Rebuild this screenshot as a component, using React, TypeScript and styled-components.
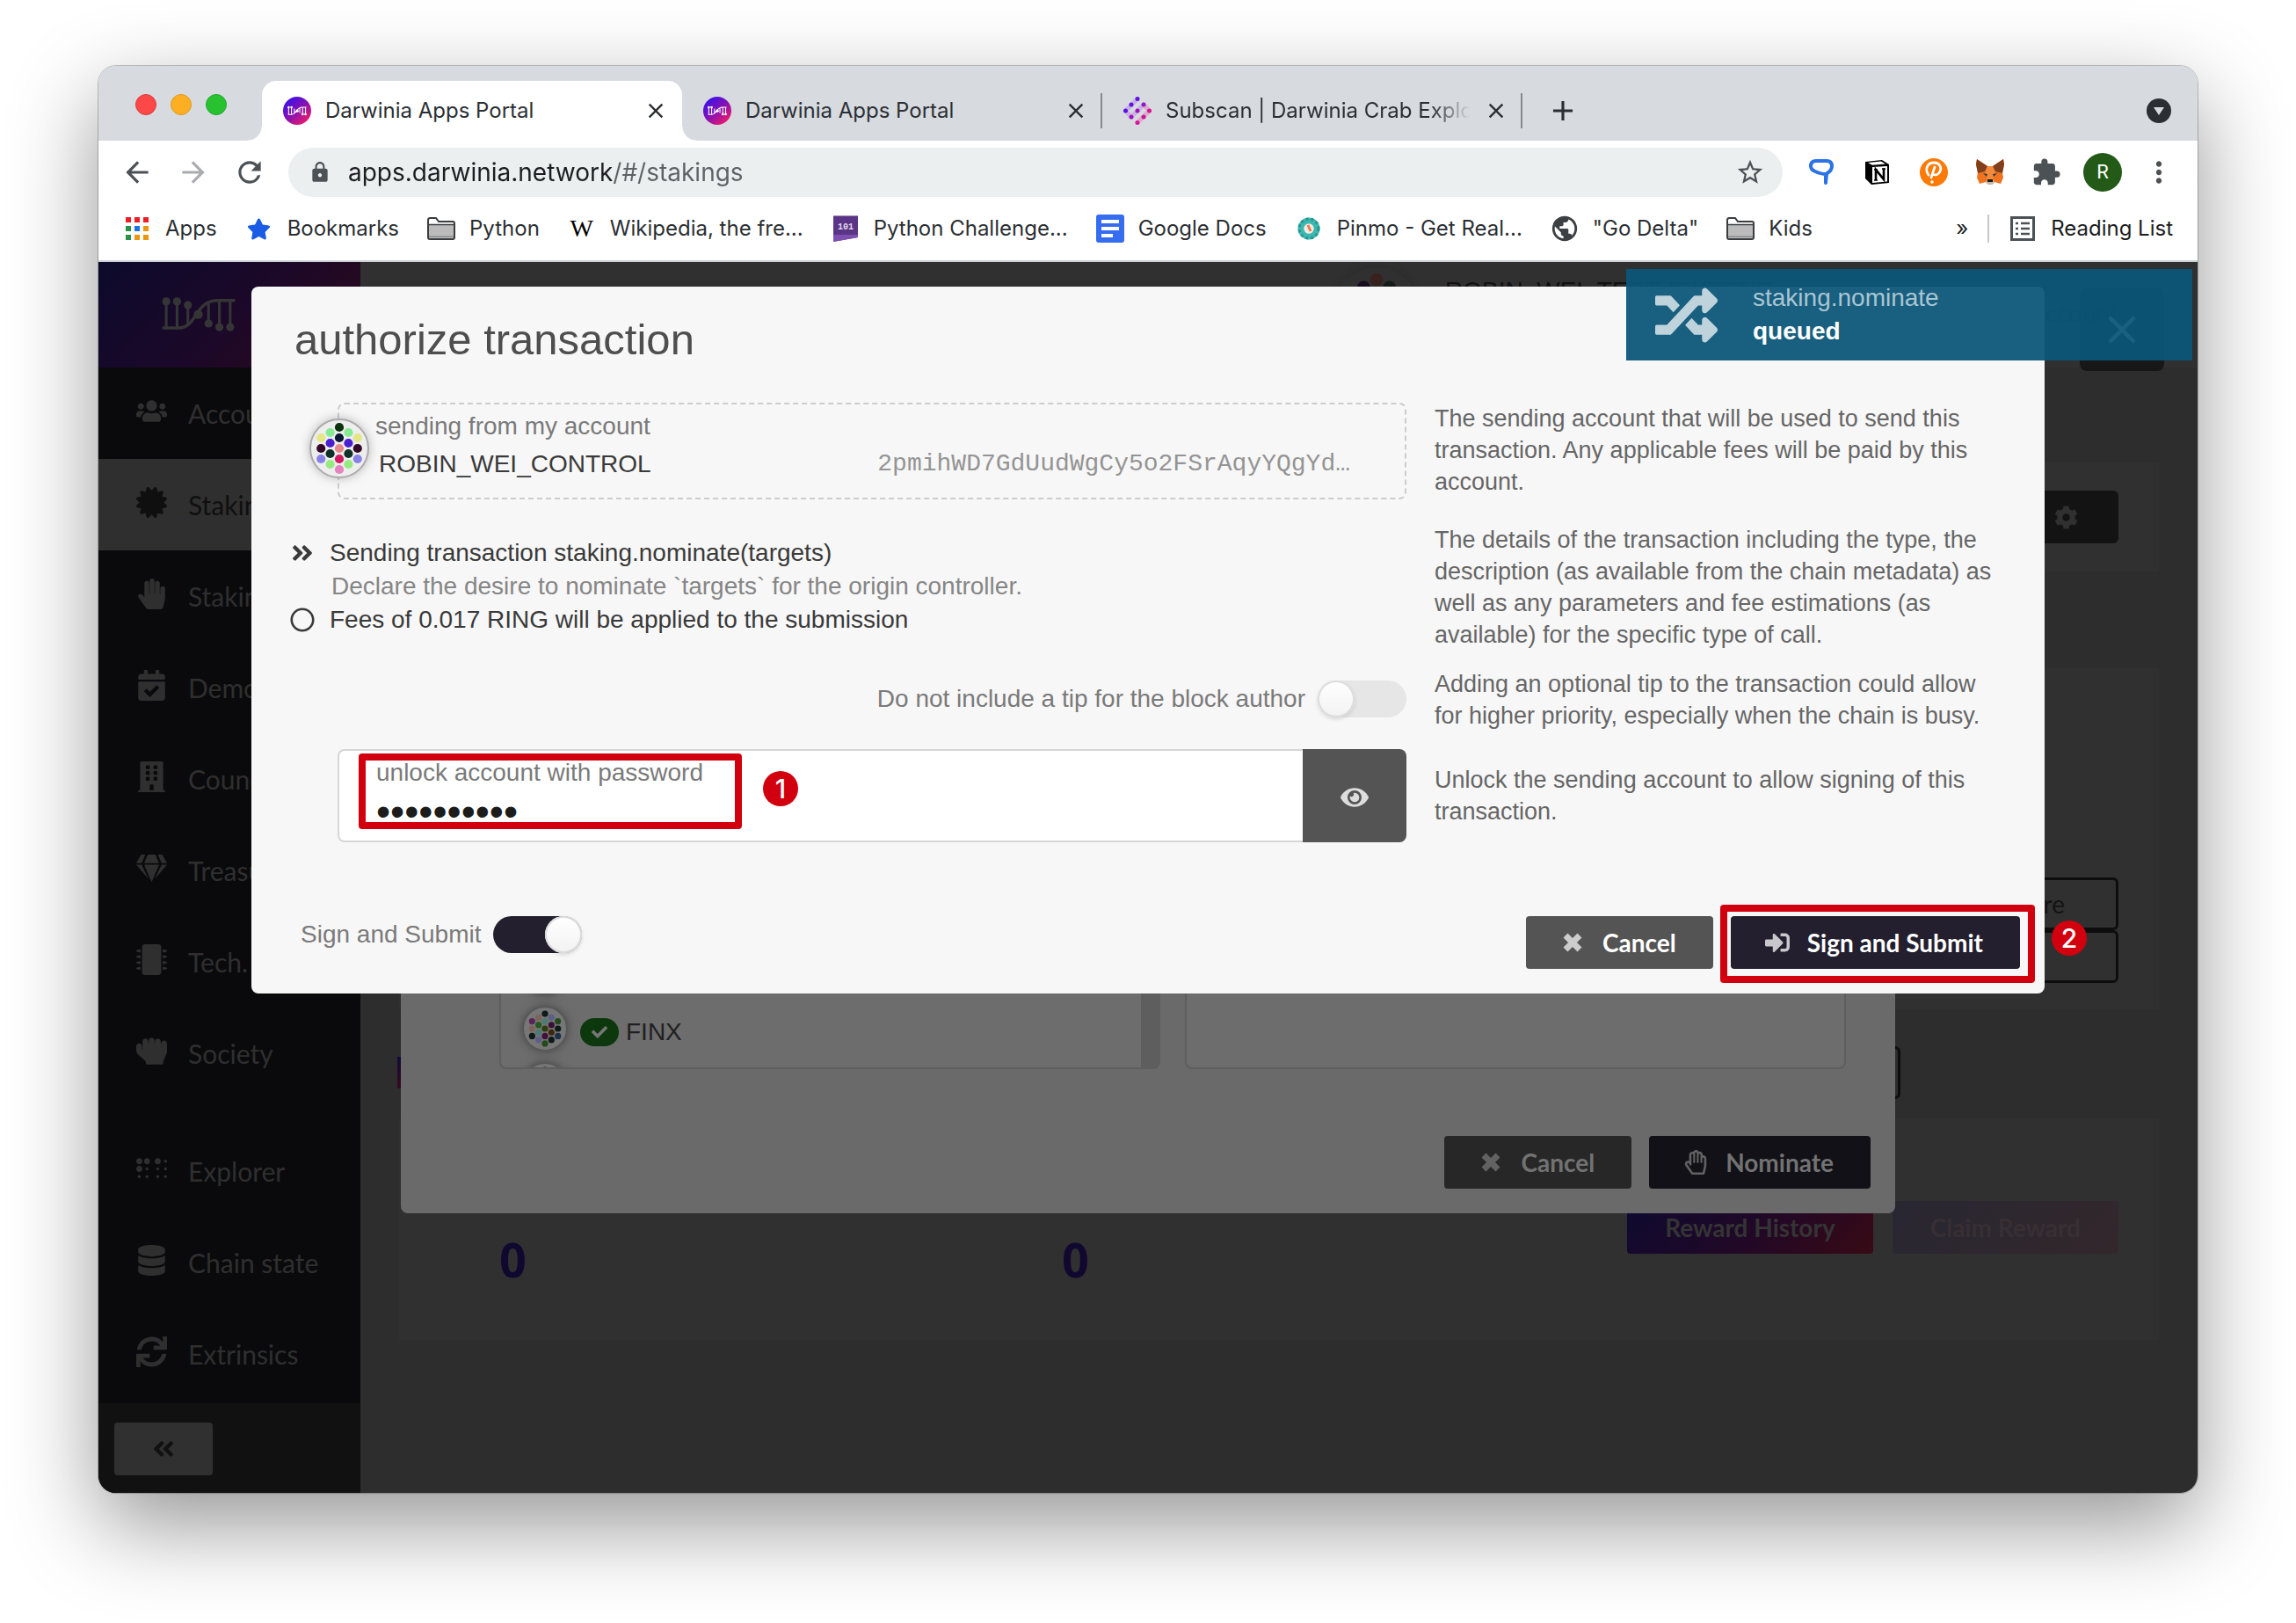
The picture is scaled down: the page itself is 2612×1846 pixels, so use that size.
import React from 'react';
import styled, { createGlobalStyle, css } from 'styled-components';
import {
  FaUsers, FaCertificate, FaHandPaper, FaRegHandPaper, FaCalendarCheck, FaBuilding, FaGem, FaMicrochip,
  FaHandRock, FaBraille, FaDatabase, FaSync, FaAngleDoubleLeft, FaAngleDoubleRight, FaRegCircle, FaEye,
  FaSignInAlt, FaRandom, FaCog, FaCheck, FaStar,
} from 'react-icons/fa';
import {
  MdArrowBack, MdArrowForward, MdRefresh, MdLock, MdStarBorder, MdExtension, MdMoreVert, MdClose, MdAdd, MdPublic,
} from 'react-icons/md';

const sans = `"Liberation Sans", Arial, sans-serif`;
const lato = `Lato, sans-serif`;
const system = `Inter, sans-serif`;
const mono = `"Liberation Mono", monospace`;

const ink = '#231f2e';
const red = '#d2000f';

const GlobalStyle = createGlobalStyle`
  *, *::before, *::after { box-sizing: border-box; }
  body { margin: 0; background: #fff; font-family: ${sans}; }
  button, input { font: inherit; border: 0; margin: 0; padding: 0; background: none; color: inherit; }
  button { cursor: pointer; }
  a { color: inherit; text-decoration: none; }
  h1, p, ul { margin: 0; padding: 0; font-weight: 400; list-style: none; }
  svg { display: block; flex: none; }
`;

/* ---------- window frame ---------- */

const Desktop = styled.div`
  display: flex;
  min-height: 100vh;
  padding: 75px 112px 148px;
`;

const Window = styled.div`
  flex: 1;
  min-width: 0;
  display: flex;
  flex-direction: column;
  border-radius: 20px;
  overflow: hidden;
  background: #fff;
  box-shadow: 0 0 0 1px rgba(0, 0, 0, 0.22), 0 36px 100px rgba(0, 0, 0, 0.42);
`;

const TabStrip = styled.div`
  display: flex;
  align-items: flex-end;
  height: 85px;
  padding: 0 30px 0 42px;
  background: #d7dadf;
`;

const Lights = styled.div`
  display: flex;
  align-items: center;
  gap: 16px;
  height: 82px;
  margin-right: 40px;
`;

const Light = styled.span<{ $fill: string; $edge: string }>`
  width: 24px;
  height: 24px;
  border-radius: 50%;
  background: ${p => p.$fill};
  border: 1px solid ${p => p.$edge};
`;

const Tab = styled.div<{ $active?: boolean; $divided?: boolean }>`
  position: relative;
  flex: 0 1 478px;
  min-width: 0;
  display: flex;
  align-items: center;
  gap: 16px;
  height: 68px;
  padding: 0 16px 0 24px;
  font: 24px/32px ${system};
  color: #2b2f33;
  ${p => p.$active && css`
    background: #fff;
    border-radius: 16px 16px 0 0;
    &::before, &::after {
      content: '';
      position: absolute;
      bottom: 0;
      width: 16px;
      height: 16px;
    }
    &::before { left: -16px; background: radial-gradient(circle at 0 0, transparent 15px, #fff 16px); }
    &::after { right: -16px; background: radial-gradient(circle at 100% 0, transparent 15px, #fff 16px); }
  `}
  ${p => p.$divided && css`
    &::after {
      content: '';
      position: absolute;
      right: 0;
      top: 14px;
      width: 2px;
      height: 40px;
      background: #85898e;
    }
  `}
`;

const TabTitle = styled.span<{ $fade?: boolean }>`
  flex: 1;
  min-width: 0;
  overflow: hidden;
  white-space: nowrap;
  ${p => p.$fade && css`mask-image: linear-gradient(90deg, #000 calc(100% - 44px), transparent);`}
`;

const PlainButton = styled.button`
  display: flex;
  align-items: center;
  justify-content: center;
`;

const NewTab = styled(PlainButton)`
  width: 40px;
  height: 68px;
  margin-left: 26px;
  color: #2b2f33;
`;

const TabSearch = styled(PlainButton)`
  height: 68px;
  margin-left: auto;
`;

const Toolbar = styled.div`
  display: flex;
  align-items: center;
  height: 72px;
  padding: 0 12px;
`;

const ToolButton = styled(PlainButton)<{ $color?: string }>`
  flex: none;
  width: 64px;
  height: 56px;
  color: ${p => p.$color || '#4c5156'};
`;

const Omnibox = styled.div`
  flex: 1;
  min-width: 0;
  display: flex;
  align-items: center;
  gap: 16px;
  height: 56px;
  margin: 0 12px;
  padding: 0 20px;
  border-radius: 28px;
  background: #ebeff0;
  color: #4c5156;
`;

const UrlInput = styled.input`
  flex: 1;
  min-width: 0;
  font: 28px/36px ${system};
  outline: 0;
  color: transparent;
  background: linear-gradient(90deg, #1b1d20 300px, #5d6266 300px);
  background-clip: text;
`;

const Avatar = styled.span`
  width: 44px;
  height: 44px;
  border-radius: 50%;
  background: #235a17;
  color: #fff;
  font: 22px/44px Roboto, sans-serif;
`;

const BookmarkBar = styled.nav`
  display: flex;
  align-items: center;
  gap: 32px;
  padding: 0 28px 8px;
  height: 66px;
  border-bottom: 2px solid #cdd2d6;
  font: 24px/32px ${system};
  color: #2b2f33;
`;

const Bookmark = styled.a`
  display: flex;
  align-items: center;
  gap: 16px;
  white-space: nowrap;
`;

const IconBox = styled.span`
  display: flex;
  justify-content: center;
  width: 32px;
`;

const Wiki = styled.span`
  font: 28px/32px "Liberation Serif", serif;
  color: #000;
`;

const BookmarkEnd = styled.div`
  display: flex;
  align-items: center;
  gap: 22px;
  margin-left: auto;
  color: #1b1d20;
`;

const BarDivider = styled.span`
  width: 2px;
  height: 32px;
  background: #c4c8cc;
`;

/* ---------- dimmed application ---------- */

const Viewport = styled.div`
  position: relative;
  flex: 1;
  display: flex;
  background: #2d2d2d;
`;

const Sidebar = styled.aside`
  flex: 0 0 298px;
  min-width: 0;
  display: flex;
  flex-direction: column;
  background: #0a0a0c;
  color: #2f2f2f;
  font: 30px/36px ${lato};
`;

const Brand = styled.div`
  height: 120px;
  padding: 40px 0 0 72px;
  background: linear-gradient(135deg, #0c0a2c, #1d0828 55%, #2d0a18);
  color: #353535;
`;

const NavList = styled.ul`
  & + & { margin-top: 30px; }
`;

const NavLink = styled.a<{ $active?: boolean }>`
  display: flex;
  align-items: center;
  gap: 20px;
  height: 104px;
  padding-left: 38px;
  white-space: nowrap;
  background: ${p => (p.$active ? '#2f2f2f' : 'transparent')};
  color: ${p => (p.$active ? '#0f0f0f' : 'inherit')};
`;

const NavIcon = styled.span`
  flex: none;
  display: flex;
  justify-content: center;
  width: 44px;
  padding-bottom: 6px;
  svg { width: auto; height: 35px; }
`;

const SidebarFoot = styled.div`
  height: 102px;
  margin-top: auto;
  padding: 22px 18px;
  background: #111;
`;

const Collapse = styled(PlainButton)`
  width: 112px;
  height: 60px;
  border-radius: 4px;
  background: #303030;
  color: #111;
`;

const Main = styled.main`
  flex: 1;
  min-width: 0;
  display: flex;
  flex-direction: column;
  font-family: ${lato};
`;

const Header = styled.header`
  display: flex;
  align-items: flex-start;
  gap: 30px;
  height: 120px;
  padding: 6px 48px 0 1108px;
  background: #303030;
  color: #111;
  font: 28px/42px ${sans};
`;

const HeaderName = styled.span`
  padding-top: 6px;
  white-space: nowrap;
`;

const HeaderAction = styled(PlainButton)`
  height: 60px;
  margin: 22px 0 0 auto;
  padding: 0 40px;
  border: 2px solid #262626;
  font: 28px/36px ${lato};
`;

const Content = styled.div`
  display: flex;
  flex-direction: column;
  padding: 108px 44px 0;
`;

const Card = styled.section<{ $h: number }>`
  min-height: ${p => p.$h}px;
  padding: 32px 46px 0;
  background: #303030;
`;

const CardEnd = styled.div<{ $top?: number }>`
  display: flex;
  flex-direction: column;
  align-items: flex-end;
  padding-top: ${p => p.$top || 0}px;
`;

const SettingsButton = styled(PlainButton)`
  width: 120px;
  height: 60px;
  border-radius: 6px;
  background: #131313;
  color: #303030;
`;

const OutlineButton = styled(PlainButton)`
  width: 240px;
  height: 60px;
  padding-right: 58px;
  justify-content: flex-end;
  border: 3px solid #0d0d0d;
  border-radius: 6px;
  color: #131313;
  font: 28px/36px ${lato};
`;

const StripRow = styled.div`
  display: flex;
  align-items: center;
  height: 124px;
  padding-top: 20px;
  margin-left: -2px;
`;

const Marker = styled.span`
  width: 8px;
  height: 36px;
  margin-right: 1462px;
  background: linear-gradient(#120c36, #350b20);
`;

const Spacer = styled.div`
  height: 110px;
`;

const RewardGrid = styled.div`
  display: grid;
  grid-template-columns: 640px 640px 1fr;
  align-items: start;
  padding: 62px 0 0 68px;
`;

const Figure = styled.span`
  padding-top: 34px;
  font: 700 54px/64px "Open Sans", sans-serif;
  color: #110830;
`;

const RewardButtons = styled.div`
  display: flex;
  justify-content: flex-end;
  gap: 22px;
`;

const GradientButton = styled.button<{ $faint?: boolean }>`
  height: 60px;
  padding: 0 43px;
  border-radius: 4px;
  white-space: nowrap;
  font: 700 28px/36px ${lato};
  color: #343434;
  background: linear-gradient(135deg, #0e0a30, #220826 55%, #380a14);
  ${p => p.$faint && css`
    background: linear-gradient(135deg, #282732, #33272b);
    color: #372f34;
  `}
`;

/* ---------- dialogs ---------- */

const Layer = styled.div`
  position: absolute;
  inset: 28px 0 auto;
  display: flex;
  justify-content: center;
`;

const NominateDialog = styled.section`
  width: 72%;
  max-width: 1700px;
  height: 1054px;
  display: flex;
  flex-direction: column;
  justify-content: flex-end;
  padding: 28px;
  border-radius: 8px;
  background: #6a6a6a;
`;

const Lists = styled.div`
  display: grid;
  grid-template-columns: 1fr 1fr;
  gap: 28px;
  padding: 0 28px 76px 84px;
`;

const ListBox = styled.ul<{ $scroll?: boolean }>`
  height: 146px;
  overflow: hidden;
  padding: 2px 26px;
  border: 2px solid #5e5e5e;
  border-radius: 8px;
  background: #6d6d6d;
  ${p => p.$scroll && css`background: linear-gradient(270deg, #5e5e5e 20px, #6d6d6d 20px);`}
`;

const ListItem = styled.li`
  display: flex;
  align-items: center;
  height: 64px;
  font: 28px/36px ${sans};
  color: #202020;
`;

const CheckBadge = styled.span`
  display: flex;
  align-items: center;
  justify-content: center;
  width: 44px;
  height: 32px;
  margin: 8px 8px 0 16px;
  border-radius: 16px;
  background: #0d380d;
  color: #777;
`;

const ItemName = styled.span`
  padding-top: 8px;
`;

const AuthDialog = styled.section`
  width: 86%;
  max-width: 2040px;
  padding: 30px 0 28px;
  border-radius: 8px;
  background: #f7f7f7;
  color: #4e4e4e;
  font: 28px/38px ${sans};
`;

const Title = styled.h1`
  padding: 0 49px 42px;
  font-size: 49px;
  line-height: 60px;
`;

const Row = styled.div<{ $gap?: number }>`
  display: grid;
  grid-template-columns: minmax(0, 1fr) 642px;
  gap: 32px;
  padding: 0 52px ${p => p.$gap || 0}px 48px;
`;

const Help = styled.p<{ $top?: number }>`
  padding-top: ${p => p.$top || 0}px;
  font-size: 27px;
  line-height: 36px;
  color: #666;
`;

const AccountBox = styled.div`
  position: relative;
  height: 110px;
  margin-left: 50px;
  padding: 4px 62px 0 41px;
  border: 2px dashed #ccc;
  border-radius: 8px;
  line-height: 42px;
`;

const AccountIcon = styled.span`
  position: absolute;
  left: -34px;
  top: 16px;
`;

const FieldLabel = styled.label`
  display: block;
  line-height: 42px;
  color: #7a7a7a;
`;

const AccountLine = styled.div`
  display: flex;
  justify-content: space-between;
  padding-left: 4px;
  line-height: 44px;
  color: #3a3a3a;
`;

const Address = styled.span`
  font-family: ${mono};
  color: #949494;
`;

const Details = styled.ul`
  padding-top: 14px;
  color: #3a3a3a;
`;

const Detail = styled.li`
  display: grid;
  grid-template-columns: 20px 1fr;
  column-gap: 21px;
  align-items: center;
`;

const DetailIcon = styled.span`
  display: flex;
  justify-content: center;
`;

const Note = styled.span`
  grid-column: 2;
  padding-left: 2px;
  color: #868686;
`;

const SwitchRow = styled.label<{ $end?: boolean }>`
  display: flex;
  align-items: center;
  justify-content: ${p => (p.$end ? 'flex-end' : 'flex-start')};
  gap: 14px;
  height: 42px;
  color: #7a7a7a;
`;

const TipCell = styled.div`
  padding-top: 14px;
`;

const Switch = styled.input`
  appearance: none;
  flex: none;
  width: 101px;
  height: 42px;
  border-radius: 21px;
  background: #e6e6e6;
  &::before {
    content: '';
    display: block;
    width: 42px;
    height: 42px;
    border-radius: 50%;
    background: linear-gradient(#fff, #f2f2f2);
    box-shadow: 0 2px 4px rgba(34, 36, 38, 0.15), inset 0 0 0 2px #dcdcdd;
  }
  &:checked { background: ${ink}; }
  &:checked::before { margin-left: auto; }
`;

const PasswordBox = styled.div`
  position: relative;
  display: flex;
  height: 106px;
  margin-left: 50px;
`;

const PasswordField = styled.div`
  flex: 1;
  padding: 4px 0 0 42px;
  border: 2px solid #d6d6d6;
  border-right: 0;
  border-radius: 8px 0 0 8px;
  background: #fff;
`;

const PasswordInput = styled.input`
  display: block;
  width: 100%;
  height: 46px;
  outline: 0;
  color: #1c1c1c;
  font: 46px/46px ${sans};
`;

const RevealButton = styled(PlainButton)`
  width: 118px;
  padding-top: 4px;
  border-radius: 0 8px 8px 0;
  background: #545454;
  color: #ddd;
`;

const Actions = styled.div`
  display: flex;
  align-items: flex-start;
  justify-content: space-between;
  padding: 84px 28px 0 56px;
`;

const ButtonRow = styled.div`
  display: flex;
  justify-content: flex-end;
  gap: 20px;
`;

const ActionButton = styled.button<{ $bg: string; $fg: string; $icon: string }>`
  position: relative;
  display: flex;
  align-items: center;
  height: 60px;
  padding: 0 42px 0 36px;
  border-radius: 4px;
  background: ${p => p.$bg};
  color: ${p => p.$fg};
  white-space: nowrap;
  font: 700 28px/36px ${lato};
  svg { width: 34px; margin-right: 17px; color: ${p => p.$icon}; }
`;

/* ---------- overlays ---------- */

const Highlight = styled.span<{ $inset: string }>`
  position: absolute;
  inset: ${p => p.$inset};
  border: 8px solid ${red};
  border-radius: 4px;
  pointer-events: none;
`;

const FieldHighlight = styled(Highlight)`
  width: 436px;
`;

const StepBadge = styled.span<{ $left: string; $top: number }>`
  position: absolute;
  left: ${p => p.$left};
  top: ${p => p.$top}px;
  width: 40px;
  height: 40px;
  border-radius: 50%;
  background: ${red};
  color: #fff;
  text-align: center;
  font: 500 30px/40px ${system};
`;

const CloseOverlay = styled(PlainButton)`
  position: absolute;
  right: 38px;
  top: 30px;
  width: 96px;
  height: 94px;
  border-radius: 8px;
  background: rgba(0, 0, 0, 0.5);
  color: #fff;
`;

const Toast = styled.div`
  position: absolute;
  right: 6px;
  top: 8px;
  width: 644px;
  height: 104px;
  display: flex;
  align-items: center;
  gap: 40px;
  padding: 0 33px;
  background: rgba(11, 85, 119, 0.94);
  color: #fff;
  font: 28px/38px ${sans};
`;

const ToastTitle = styled.div`
  color: #a9c6d4;
`;

const ToastBody = styled.div``;

/* ---------- drawings ---------- */

const Dna = ({ size }: { size: number }) => (
  <svg width={size} height={size * 0.47} viewBox="0 0 82 38" fill="none" stroke="currentColor" strokeWidth="3.4" strokeLinecap="round">
    <path d="M2 34H18C40 34 36 3.500 62 3.500H80" />
    <path d="M5 5v29M17 5v29M29 9v22M52 8v20M64 4v29M76 4v29" strokeWidth="3" />
    <g fill="currentColor" stroke="none">
      <circle cx="5" cy="4.500" r="4.500" /><circle cx="17" cy="4.500" r="4.500" /><circle cx="29" cy="8.500" r="4.500" />
      <circle cx="40.500" cy="19" r="5" /><circle cx="52" cy="29" r="4.500" /><circle cx="64" cy="33" r="4.500" /><circle cx="76" cy="33" r="4.500" />
    </g>
  </svg>
);

const DarwiniaIcon = ({ id }: { id: string }) => (
  <svg width="32" height="32" viewBox="0 0 32 32">
    <defs>
      <linearGradient id={id} x1="0.15" y1="0.1" x2="0.85" y2="0.95">
        <stop offset="0" stopColor="#3c10e8" /><stop offset="0.5" stopColor="#8a12b0" /><stop offset="1" stopColor="#f51c66" />
      </linearGradient>
    </defs>
    <circle cx="16" cy="16" r="16" fill={`url(#${id})`} />
    <g transform="translate(5 11) scale(0.270)" fill="none" stroke="#fff" strokeWidth="4">
      <path d="M2 34H18C40 34 36 3.500 62 3.500H80M5 5v29M17 5v29M29 9v22M52 8v20M64 4v29M76 4v29" />
      <g fill="#fff" stroke="none"><circle cx="5" cy="4" r="5" /><circle cx="17" cy="4" r="5" /><circle cx="41" cy="19" r="6" /><circle cx="64" cy="33" r="5" /><circle cx="76" cy="33" r="5" /></g>
    </g>
  </svg>
);

const subscanDots: [number, number, string][] = [
  [16, 2.5, '#6412e0'], [9, 9, '#6412e0'], [23, 9, '#8f18c8'], [2.5, 16, '#5a0ee6'], [16, 16, '#9a14c0'],
  [29.5, 16, '#d01888'], [9, 23, '#9a14c0'], [23, 23, '#c81890'], [16, 29.5, '#d8189c'],
];
const SubscanIcon = () => (
  <svg width="32" height="32" viewBox="0 0 32 32">
    <g strokeWidth="5" strokeLinecap="round" fill="none">
      <path d="M16 2.500 2.500 16" stroke="#c3b0ea" /><path d="M23 9 9 23M2.500 16l6.500 7" stroke="#ccb2e2" /><path d="M29.500 16 16 29.500M23 9l6.500 7" stroke="#dfa8cf" />
    </g>
    {subscanDots.map(([x, y, c]) => <circle key={`${x}-${y}`} cx={x} cy={y} r="2.500" fill={c} />)}
  </svg>
);

const dotPlaces: [number, number][] = [
  [0, -24], [0, -12], [0, 0], [0, 12], [0, 24],
  [-10.4, -18], [-10.4, -6], [-10.4, 6], [-10.4, 18],
  [10.4, -18], [10.4, -6], [10.4, 6], [10.4, 18],
  [-20.8, -12], [-20.8, 0], [-20.8, 12],
  [20.8, -12], [20.8, 0], [20.8, 12],
];

const IdenticonSvg = styled.svg<{ $shade: number }>`
  overflow: visible;
  filter: drop-shadow(0 0 6px rgba(0, 0, 0, ${p => p.$shade}));
`;

const Identicon = ({ size, fill, edge, colors, shade = 0.25 }: { size: number; fill: string; edge: string; colors: string[]; shade?: number }) => (
  <IdenticonSvg width={size} height={size} viewBox="-34 -34 68 68" $shade={shade}>
    <circle r="33" fill={fill} stroke={edge} strokeWidth="2" />
    {dotPlaces.map(([x, y], i) => <circle key={i} cx={x} cy={y} r="5.100" fill={colors[i]} />)}
  </IdenticonSvg>
);

const controlColors = [
  '#0d330d', '#0a1832', '#e5898a', '#d01a60', '#e583bf',
  '#86eb92', '#4a1fd0', '#0d3028', '#96ea80', '#86eb92', '#4a1fd0', '#0d3028', '#96ea80',
  '#e3e787', '#330828', '#8781e6', '#e3e787', '#330828', '#8781e6',
];
const finxColors = [
  '#0d1a18', '#4f7a70', '#2c3f0c', '#451040', '#234a1c',
  '#7d6459', '#23591f', '#4c7a74', '#5e5f86', '#5c5f84', '#3a1038', '#40280f', '#0d1a18',
  '#5a2356', '#7d6459', '#0d1a18', '#234a1c', '#0d1a18', '#1c3048',
];
const headerColors = [
  '#3a221c', '#303030', '#303030', '#303030', '#303030',
  '#1a0c20', '#303030', '#303030', '#303030', '#141c18', '#303030', '#303030', '#303030',
  '#303030', '#303030', '#303030', '#303030', '#303030', '#303030',
];

const CrossIcon = () => (
  <svg width="34" height="28" viewBox="0 0 34 28" fill="none" stroke="currentColor" strokeWidth="7" strokeLinejoin="round">
    <path d="M9 6l16 16M25 6L9 22" />
  </svg>
);

const AppsGrid = () => (
  <svg width="26" height="26" viewBox="0 0 26 26">
    {['#ee1d25', '#ee1d25', '#ee1d25', '#2a9248', '#1a73e8', '#eb9610', '#2a9248', '#eb9610', '#eb9610'].map((c, i) => (
      <rect key={i} x={(i % 3) * 10} y={Math.floor(i / 3) * 10} width="6" height="6" fill={c} />
    ))}
  </svg>
);

const Folder = () => (
  <svg width="32" height="26" viewBox="0 0 32 26">
    <path d="M1 3.500Q1 1 3 1h7l3 4h16q2 0 2 2v16q0 2-2 2H3q-2 0-2-2z" fill="#fff" stroke="#3a3d40" strokeWidth="2" />
    <path d="M2 9h28v14H2z" fill="#bbb" /><path d="M1 8.500h30" stroke="#3a3d40" strokeWidth="1.500" />
    <path d="M2 22.500h28" stroke="#888" strokeWidth="2" />
  </svg>
);

const Challenge = () => (
  <svg width="28" height="30" viewBox="0 0 28 30">
    <path d="M0 0h28v25L0 30z" fill="#5b3585" /><path d="M0 22h28v3L0 30z" fill="#7d4fb0" />
    <path d="M0 .5h28" stroke="#a48cba" />
    <text x="14" y="16" fill="#e4dcee" fontSize="10" fontFamily="Liberation Mono, monospace" fontWeight="700" textAnchor="middle">101</text>
  </svg>
);

const Docs = () => (
  <svg width="32" height="32" viewBox="0 0 32 32">
    <rect width="32" height="32" rx="3" fill="#356cf0" />
    <path d="M6 8h20M6 16h20M6 24h13" stroke="#fff" strokeWidth="4" />
  </svg>
);

const Pinmo = () => (
  <svg width="28" height="28" viewBox="0 0 28 28">
    <circle cx="14" cy="14" r="9" fill="none" stroke="#3cb8b0" strokeWidth="7" />
    <circle cx="14" cy="14" r="11" fill="none" stroke="#2a938f" strokeWidth="3" strokeDasharray="3 3" />
    <circle cx="14" cy="14" r="5.500" fill="#f6ece4" /><path d="M13 10l3 7" stroke="#ee7a50" strokeWidth="3" />
  </svg>
);

const ReadingList = () => (
  <svg width="28" height="28" viewBox="0 0 28 28" fill="none" stroke="#4c5156">
    <rect x="1.500" y="1.500" width="25" height="25" strokeWidth="3" />
    <path d="M6 8h3M12 8h10M6 14h3M12 14h10M6 20h3M12 20h10" strokeWidth="2.600" />
  </svg>
);

const TabSearchIcon = () => (
  <svg width="28" height="28" viewBox="0 0 28 28">
    <circle cx="14" cy="14" r="14" fill="#2b2f33" /><path d="M8 10h12l-6 9z" fill="#d7dadf" />
  </svg>
);

const PinIcon = () => (
  <svg width="28" height="30" viewBox="0 0 28 30" fill="none" stroke="#2a72e5" strokeWidth="4" strokeLinejoin="round">
    <path d="M8 2h12q6 0 6 6 0 5-6 8.500L19 27V17Q14 17 7 14 2 12 2 8q0-6 6-6z" />
  </svg>
);

const NotionIcon = () => (
  <svg width="30" height="30" viewBox="0 0 30 30">
    <path d="M1 3 20 1l8 5v21L8 29l-7-7z" fill="#000" />
    <path d="M4 4 19 2.500l5 3L9 6.700z" fill="#fff" /><path d="M9 9l17-1v17.500L9 27z" fill="#fff" />
    <path d="M13 24V12l9 11V10.500" fill="none" stroke="#000" strokeWidth="2.600" />
    <path d="M11 12h4M20 11h4M11 24h4" stroke="#000" strokeWidth="1.500" />
  </svg>
);

const OrangeP = () => (
  <svg width="32" height="32" viewBox="0 0 32 32">
    <circle cx="16" cy="16" r="16" fill="#fb7a08" />
    <path d="M10 19C5 12 9 5 16 5c7 0 9 6 7 10-1.500 3.500-5 4.500-8 3.500M17 10l-4 12" fill="none" stroke="#fff" strokeWidth="2.800" strokeLinecap="round" />
    <circle cx="14" cy="27" r="1.800" fill="#fff" />
  </svg>
);

const Fox = () => (
  <svg width="32" height="30" viewBox="0 0 32 30">
    <path d="M1 0l12 8h6L31 0l1 6-2 9 1 6-3 7-7-2-3 3h-4l-3-3-7 2-3-7 1-6-2-9z" fill="#ee7420" />
    <path d="M1 0l12 8-3 6-8 2L0 6zM31 0 19 8l3 6 8 2 2-10z" fill="#80401c" />
    <path d="M13 8h6l3 8-3 7h-6l-3-7z" fill="#f58a3a" /><path d="M8 16l5 1-1 3zM24 16l-5 1 1 3z" fill="#343a44" />
    <path d="M11 26l2-3h6l2 3-3 3h-4z" fill="#c8b8a8" /><path d="M13 23h6v3h-6z" fill="#1a1a1c" />
  </svg>
);

/* ---------- page ---------- */

const primaryNav = [
  { label: 'Accounts', icon: FaUsers }, { label: 'Staking', icon: FaCertificate, active: true },
  { label: 'Staking', icon: FaHandPaper }, { label: 'Democracy', icon: FaCalendarCheck },
  { label: 'Council', icon: FaBuilding }, { label: 'Treasury', icon: FaGem },
  { label: 'Tech. committee', icon: FaMicrochip }, { label: 'Society', icon: FaHandRock },
];
const secondaryNav = [
  { label: 'Explorer', icon: FaBraille }, { label: 'Chain state', icon: FaDatabase }, { label: 'Extrinsics', icon: FaSync },
];

type NavEntry = { label: string; icon: React.ComponentType<any>; active?: boolean };

const NavGroup = ({ items }: { items: NavEntry[] }) => (
  <>
    {items.map(({ label, icon: Icon, active }, i) => (
      <li key={i}>
        <NavLink href="#" $active={active}>
          <NavIcon><Icon /></NavIcon>
          {label}
        </NavLink>
      </li>
    ))}
  </>
);

const bookmarks = [
  { label: 'Apps', icon: <AppsGrid /> },
  { label: 'Bookmarks', icon: <FaStar size={27} color="#1a5ce6" /> },
  { label: 'Python', icon: <Folder /> },
  { label: 'Wikipedia, the fre...', icon: <Wiki>W</Wiki> },
  { label: 'Python Challenge...', icon: <Challenge /> },
  { label: 'Google Docs', icon: <Docs /> },
  { label: 'Pinmo - Get Real...', icon: <Pinmo /> },
  { label: '"Go Delta"', icon: <MdPublic size={34} color="#3c4043" /> },
  { label: 'Kids', icon: <Folder /> },
];

const Chrome = () => (
  <>
    <TabStrip>
      <Lights>
        <Light $fill="#fc4846" $edge="#e0383a" />
        <Light $fill="#fdaf24" $edge="#df9a20" />
        <Light $fill="#28c231" $edge="#1fa82a" />
      </Lights>
      <Tab $active>
        <DarwiniaIcon id="fav-a" />
        <TabTitle>Darwinia Apps Portal</TabTitle>
        <PlainButton aria-label="Close tab"><MdClose size={28} /></PlainButton>
      </Tab>
      <Tab $divided>
        <DarwiniaIcon id="fav-b" />
        <TabTitle>Darwinia Apps Portal</TabTitle>
        <PlainButton aria-label="Close tab"><MdClose size={28} /></PlainButton>
      </Tab>
      <Tab $divided>
        <SubscanIcon />
        <TabTitle $fade>Subscan | Darwinia Crab Explorer</TabTitle>
        <PlainButton aria-label="Close tab"><MdClose size={28} /></PlainButton>
      </Tab>
      <NewTab aria-label="New tab"><MdAdd size={38} /></NewTab>
      <TabSearch aria-label="Search tabs"><TabSearchIcon /></TabSearch>
    </TabStrip>
    <Toolbar>
      <ToolButton aria-label="Back"><MdArrowBack size={38} /></ToolButton>
      <ToolButton aria-label="Forward" $color="#a9acb0"><MdArrowForward size={38} /></ToolButton>
      <ToolButton aria-label="Reload"><MdRefresh size={38} /></ToolButton>
      <Omnibox>
        <IconBox><MdLock size={26} /></IconBox>
        <UrlInput aria-label="Address" defaultValue="apps.darwinia.network/#/stakings" />
        <PlainButton aria-label="Bookmark this page"><MdStarBorder size={34} /></PlainButton>
      </Omnibox>
      <ToolButton aria-label="Pin"><PinIcon /></ToolButton>
      <ToolButton aria-label="Notion"><NotionIcon /></ToolButton>
      <ToolButton aria-label="Collect"><OrangeP /></ToolButton>
      <ToolButton aria-label="Wallet"><Fox /></ToolButton>
      <ToolButton aria-label="Extensions"><MdExtension size={34} /></ToolButton>
      <ToolButton aria-label="Profile"><Avatar>R</Avatar></ToolButton>
      <ToolButton aria-label="Menu"><MdMoreVert size={38} /></ToolButton>
    </Toolbar>
    <BookmarkBar>
      {bookmarks.map(b => (
        <Bookmark key={b.label} href="#"><IconBox>{b.icon}</IconBox>{b.label}</Bookmark>
      ))}
      <BookmarkEnd>
        <span>»</span>
        <BarDivider />
        <Bookmark href="#"><IconBox><ReadingList /></IconBox>Reading List</Bookmark>
      </BookmarkEnd>
    </BookmarkBar>
  </>
);

const Background = () => (
  <>
    <Sidebar>
      <Brand><Dna size={84} /></Brand>
      <NavList><NavGroup items={primaryNav} /></NavList>
      <NavList><NavGroup items={secondaryNav} /></NavList>
      <SidebarFoot>
        <Collapse aria-label="Collapse sidebar"><FaAngleDoubleLeft size={28} /></Collapse>
      </SidebarFoot>
    </Sidebar>
    <Main>
      <Header>
        <Identicon size={96} fill="#303030" edge="#303030" shade={0.12} colors={headerColors} />
        <HeaderName>ROBIN_WEI_TEST (EXTENS</HeaderName>
        <HeaderAction>account</HeaderAction>
      </Header>
      <Content>
        <Card $h={124}>
          <CardEnd><SettingsButton aria-label="Settings"><FaCog size={27} /></SettingsButton></CardEnd>
        </Card>
        <Spacer />
        <Card $h={388}>
          <CardEnd $top={206}>
            <OutlineButton>Bond more</OutlineButton>
            <OutlineButton aria-label="Unbond" />
          </CardEnd>
        </Card>
        <StripRow>
          <Marker />
          <OutlineButton aria-label="Nominate" />
        </StripRow>
        <Card $h={252}>
          <RewardGrid>
            <Figure>0</Figure>
            <Figure>0</Figure>
            <RewardButtons>
              <GradientButton>Reward History</GradientButton>
              <GradientButton $faint>Claim Reward</GradientButton>
            </RewardButtons>
          </RewardGrid>
        </Card>
      </Content>
    </Main>
  </>
);

const Nominate = () => (
  <Layer>
    <NominateDialog>
      <Lists>
        <ListBox $scroll>
          <ListItem><Identicon size={48} fill="#777" edge="#777" shade={0.5} colors={finxColors} /></ListItem>
          <ListItem>
            <Identicon size={48} fill="#777" edge="#777" shade={0.5} colors={finxColors} />
            <CheckBadge><FaCheck size={18} /></CheckBadge>
            <ItemName>FINX</ItemName>
          </ListItem>
          <ListItem><Identicon size={48} fill="#777" edge="#777" shade={0.5} colors={finxColors} /></ListItem>
        </ListBox>
        <ListBox />
      </Lists>
      <ButtonRow>
        <ActionButton $bg="#272727" $fg="#727272" $icon="#626262"><CrossIcon />Cancel</ActionButton>
        <ActionButton $bg="#121117" $fg="#727272" $icon="#626262"><FaRegHandPaper size={28} />Nominate</ActionButton>
      </ButtonRow>
    </NominateDialog>
  </Layer>
);

const Authorize = () => (
  <Layer>
    <AuthDialog role="dialog" aria-labelledby="auth-title">
      <Title id="auth-title">authorize transaction</Title>
      <Row $gap={28}>
        <AccountBox>
          <AccountIcon><Identicon size={68} fill="#eee" edge="#aaa" colors={controlColors} /></AccountIcon>
          <FieldLabel as="div">sending from my account</FieldLabel>
          <AccountLine>
            <span>ROBIN_WEI_CONTROL</span>
            <Address>2pmihWD7GdUudWgCy5o2FSrAqyYQgYd…</Address>
          </AccountLine>
        </AccountBox>
        <Help>The sending account that will be used to send this transaction. Any applicable fees will be paid by this account.</Help>
      </Row>
      <Row $gap={20}>
        <Details>
          <Detail>
            <DetailIcon><FaAngleDoubleRight size={28} /></DetailIcon>
            <span>Sending transaction staking.nominate(targets)</span>
            <Note>Declare the desire to nominate `targets` for the origin controller.</Note>
          </Detail>
          <Detail>
            <DetailIcon><FaRegCircle size={28} /></DetailIcon>
            <span>Fees of 0.017 RING will be applied to the submission</span>
          </Detail>
        </Details>
        <Help>The details of the transaction including the type, the description (as available from the chain metadata) as well as any parameters and fee estimations (as available) for the specific type of call.</Help>
      </Row>
      <Row $gap={20}>
        <TipCell>
          <SwitchRow $end>
            Do not include a tip for the block author
            <Switch type="checkbox" />
          </SwitchRow>
        </TipCell>
        <Help>Adding an optional tip to the transaction could allow for higher priority, especially when the chain is busy.</Help>
      </Row>
      <Row>
        <PasswordBox>
          <PasswordField>
            <FieldLabel htmlFor="password">unlock account with password</FieldLabel>
            <PasswordInput id="password" type="password" defaultValue="darwinia01" />
          </PasswordField>
          <RevealButton aria-label="Show password"><FaEye size={32} /></RevealButton>
          <FieldHighlight $inset="5px auto 15px 24px" />
          <StepBadge $left="484px" $top={25}>1</StepBadge>
        </PasswordBox>
        <Help $top={17}>Unlock the sending account to allow signing of this transaction.</Help>
      </Row>
      <Actions>
        <SwitchRow>
          Sign and Submit
          <Switch type="checkbox" defaultChecked />
        </SwitchRow>
        <ButtonRow>
          <ActionButton $bg="#545454" $fg="#fff" $icon="#ccc"><CrossIcon />Cancel</ActionButton>
          <ActionButton $bg={ink} $fg="#fff" $icon="#c8c7cb">
            <FaSignInAlt size={28} />Sign and Submit
            <Highlight $inset="-13px -17px -16px -12px" />
            <StepBadge $left="calc(100% + 36px)" $top={5}>2</StepBadge>
          </ActionButton>
        </ButtonRow>
      </Actions>
    </AuthDialog>
  </Layer>
);

export default function App() {
  return (
    <>
      <GlobalStyle />
      <Desktop>
        <Window>
          <Chrome />
          <Viewport>
            <Background />
            <Nominate />
            <Authorize />
            <CloseOverlay aria-label="Close"><MdClose size={54} /></CloseOverlay>
            <Toast role="status">
              <FaRandom size={71} color="#bfd3dd" />
              <ToastBody>
                <ToastTitle>staking.nominate</ToastTitle>
                <strong>queued</strong>
              </ToastBody>
            </Toast>
          </Viewport>
        </Window>
      </Desktop>
    </>
  );
}
